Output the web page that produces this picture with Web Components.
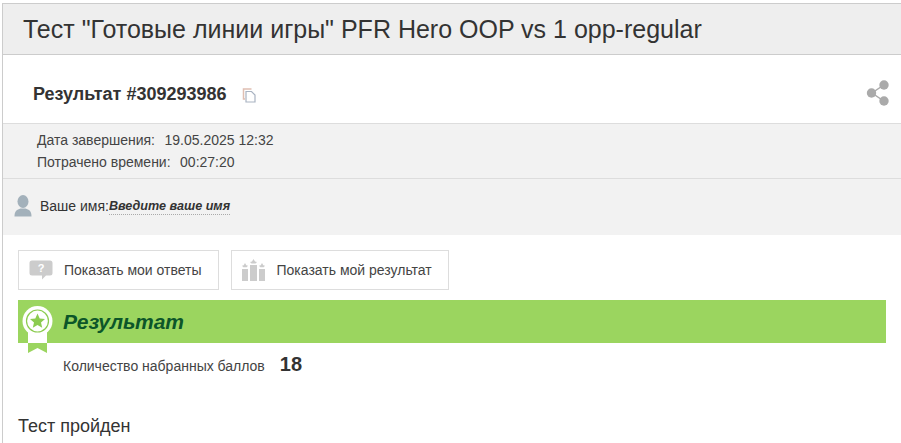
<!DOCTYPE html>
<html>
<head>
<meta charset="utf-8">
<title>Результат</title>
<style>
    html, body { margin: 0; background: #fff; height: 100%; overflow: hidden; }
    body { font-family: "Liberation Sans", Arial, sans-serif; color: #333; }
</style>
</head>
<body>

<template id="test-page">
    <style>
        :host { display: block; margin: 3px 0 0 2px; border-top: 1px solid #ccc; border-left: 1px solid #ccc; height: 440px; box-sizing: border-box; overflow: hidden; }
        .title { margin: 0; height: 50px; padding-left: 20px; line-height: 50px; font-size: 25px; font-weight: 400; color: #333; background: #eee; border-bottom: 1px solid #ccc; }
    </style>
    <h1 class="title"><slot name="title"></slot></h1>
    <slot></slot>
</template>

<template id="result-head">
    <style>
        :host { display: flex; align-items: center; height: 68px; padding: 10px 11px 0 30px; box-sizing: border-box; }
        .name { font-size: 18px; font-weight: 700; color: #333; }
        svg { display: block; }
        .copy { margin: 2px 0 0 15px; }
        .share { margin-left: auto; margin-top: -2px; }
    </style>
    <span class="name"><slot></slot></span>
    <svg class="copy" width="15" height="15" viewBox="0 0 15 15">
        <path d="M9.500 1H1.500V11H3" fill="none" stroke="#e0bfb2" stroke-width="1.500"/>
        <path d="M4 3.500H9.500L13 7V14H4Z" fill="#fff" stroke="#a9b3c2" stroke-width="1.200"/>
    </svg>
    <svg class="share" width="24" height="26" viewBox="0 0 24 26">
        <path d="M17 5.500L6 13L17 20.500" fill="none" stroke="#aaa" stroke-width="1.500"/>
        <circle cx="18" cy="5" r="4.700" fill="#aaa"/>
        <circle cx="5.500" cy="13" r="4.700" fill="#aaa"/>
        <circle cx="18" cy="21" r="4.700" fill="#aaa"/>
    </svg>
</template>

<template id="info-block">
    <style>
        :host { display: block; height: 55px; padding: 5px 0 0 34px; box-sizing: border-box; background: #f2f2f2; border-top: 1px solid #ddd; font-size: 14px; line-height: 22px; color: #444; }
        ::slotted(div) { display: flex; gap: 9.5px; }
    </style>
    <slot></slot>
</template>

<template id="name-row">
    <style>
        :host { display: flex; align-items: center; height: 57px; padding: 0 0 2px 11px; box-sizing: border-box; background: #f2f2f2; border-top: 1px solid #ddd; font-size: 14px; color: #333; }
        svg { display: block; margin-right: 8px; }
        .edit { font-size: 12.6px; font-weight: 700; font-style: italic; border-bottom: 1px dotted #aaa; line-height: 16px; }
    </style>
    <svg width="18" height="22" viewBox="0 0 18 22">
        <ellipse cx="9" cy="6.500" rx="5.500" ry="6.500" fill="#a3b1bb"/>
        <path d="M0.500 21.500C0.500 16 3 14.500 6.500 13.500H11.500C15 14.500 17.500 16 17.500 21.500Z" fill="#a3b1bb"/>
    </svg>
    <span><slot name="label"></slot></span><span class="edit"><slot></slot></span>
</template>

<template id="tab-button">
    <style>
        :host { display: flex; align-items: center; height: 40px; padding-right: 16px; box-sizing: border-box; border: 1px solid #ddd; background: #fff; font-size: 14px; color: #444; }
        ::slotted(svg) { display: block; flex: none; }
        .icon { display: flex; margin-left: 10px; margin-right: 11px; }
    </style>
    <span class="icon"><slot name="icon"></slot></span>
    <slot></slot>
</template>

<template id="result-panel">
    <style>
        :host { display: block; margin: 10px 0 0 15px; }
        .band { position: relative; display: flex; align-items: center; height: 43px; width: 868px; padding-left: 45px; box-sizing: border-box; background: #9bd55f; color: #0c5629; font-size: 21px; font-weight: 700; font-style: italic; }
        .badge { position: absolute; left: 4px; top: 6px; }
        .score { display: flex; align-items: center; height: 44px; padding-left: 45px; font-size: 14px; color: #444; }
        .score ::slotted([slot=label]) { margin-top: 2px; }
        .value { margin: 0 0 2px 15px; font-size: 20px; font-weight: 700; color: #333; }
        .passed { margin-top: 29px; font-size: 18px; color: #333; }
    </style>
    <div class="band">
        <svg class="badge" width="32" height="48" viewBox="0 0 32 48">
            <path d="M6 26V47L15.500 42L25 47V26Z" fill="#9bd55f"/>
            <path d="M6 26H25V37H6Z" fill="#fff"/>
            <circle cx="15.500" cy="15" r="15" fill="#fff"/>
            <circle cx="15.500" cy="15" r="11" fill="#fff" stroke="#8ccc50" stroke-width="1.200"/>
            <path d="M15.500 7.500L17.700 12.400L23 13L19 16.500L20.200 21.800L15.500 19L10.800 21.800L12 16.500L8 13L13.300 12.400Z" fill="#8ccc50"/>
        </svg>
        <slot name="heading"></slot>
    </div>
    <div class="score"><slot name="label"></slot><span class="value"><slot name="value"></slot></span></div>
    <div class="passed"><slot></slot></div>
</template>

<test-page>
    <span slot="title">Тест "Готовые линии игры" PFR Hero OOP vs 1 opp-regular</span>
    <result-head>Результат #309293986</result-head>
    <info-block>
        <div><span>Дата завершения:</span><span>19.05.2025 12:32</span></div>
        <div><span>Потрачено времени:</span><span>00:27:20</span></div>
    </info-block>
    <name-row><span slot="label">Ваше имя:</span>Введите ваше имя</name-row>
    <tab-bar>
        <tab-button>
            <svg slot="icon" width="24" height="20" viewBox="0 0 24 20"><path d="M3 0.500H21Q23.500 .5 23.500 3V13Q23.500 15.500 21 15.500H17L13 19.500V15.500H3Q.5 15.500 .5 13V3Q.5 .5 3 .5Z" fill="#ccc"/><text x="12" y="12" font-size="11" font-weight="700" fill="#fff" text-anchor="middle" font-family="Liberation Sans">?</text></svg>
            Показать мои ответы
        </tab-button>
        <tab-button>
            <svg slot="icon" width="24" height="22" viewBox="0 0 24 22"><path d="M0 10H6V22H0ZM8 6H15V22H8ZM17 10H23V22H17Z" fill="#ccc"/><path d="M11.500 0L13 2.500L15 3L13.500 4.500H9.500L8 3L10 2.500ZM3 4L4.300 6.200L6 6.800L4.700 8.300H1.300L0 6.800L1.700 6.200ZM20 4L21.300 6.200L23 6.800L21.700 8.300H18.300L17 6.800L18.700 6.200Z" fill="#ccc"/></svg>
            Показать мой результат
        </tab-button>
    </tab-bar>
    <result-panel>
        <span slot="heading">Результат</span>
        <span slot="label">Количество набранных баллов</span>
        <span slot="value">18</span>
        Тест пройден
    </result-panel>
</test-page>

<script>
    // tiny helper, every element here is just a template stamped into a shadow root
    function stamp(tag, templateId) {
        const content = document.getElementById(templateId).content;
        customElements.define(tag, class extends HTMLElement {
            constructor() {
                super();
                this.attachShadow({ mode: 'open' }).appendChild(document.importNode(content, true));
            }
        });
    }

    stamp('test-page', 'test-page');
    stamp('result-head', 'result-head');
    stamp('info-block', 'info-block');
    stamp('name-row', 'name-row');
    stamp('tab-button', 'tab-button');
    stamp('result-panel', 'result-panel');

    class TabBar extends HTMLElement {
        constructor() {
            super();
            this.attachShadow({ mode: 'open' }).innerHTML = `
                <style>
                    :host { display: flex; gap: 12px; margin: 15px 0 0 15px; }
                </style>
                <slot></slot>`;
        }
    }
    customElements.define('tab-bar', TabBar);
</script>
</body>
</html>
